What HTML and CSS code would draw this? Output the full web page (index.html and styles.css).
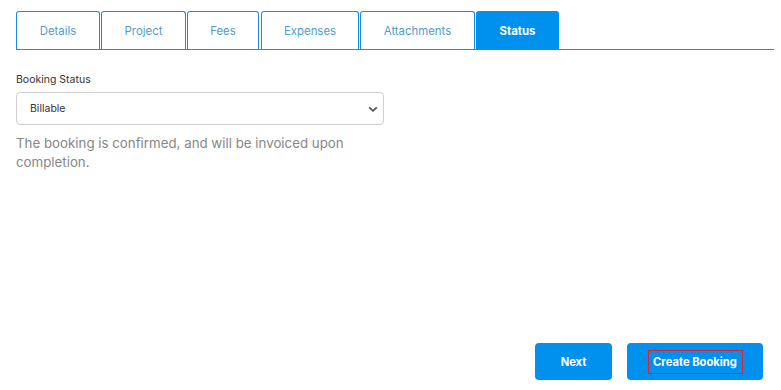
FILE: index.html
```html
<!DOCTYPE html>
<html>
<head>
<meta charset="utf-8">
<link rel="stylesheet" href="styles.css">
</head>
<body>
<div class="page">
  <div class="tabs">
    <div class="tab t1">Details</div>
    <div class="tab t2">Project</div>
    <div class="tab t3">Fees</div>
    <div class="tab t4">Expenses</div>
    <div class="tab t5">Attachments</div>
    <div class="tab t6 active">Status</div>
  </div>
  <div class="content">
    <label class="label">Booking Status</label>
    <div class="select">
      <span>Billable</span>
      <svg class="chev" width="10" height="7" viewBox="0 0 10 7"><path d="M1.2 1.4 L5 4.9 L8.8 1.4" fill="none" stroke="#555" stroke-width="1.8"/></svg>
    </div>
    <p class="desc">The booking is confirmed, and will be invoiced upon completion.</p>
  </div>
  <div class="actions">
    <div class="btn next">Next</div>
    <div class="btn create"><span class="focus">Create Booking</span></div>
  </div>
</div>
</body>
</html>
```
FILE: styles.css
```css
* { box-sizing: border-box; }
html, body { margin: 0; padding: 0; background: #fff; }
body { font-family: Inter, "Noto Sans", sans-serif; }
.page {
  height: 390px;
  display: flex;
  flex-direction: column;
  padding: 11px 7px 10px 16px;
}
.tabs {
  display: flex;
  gap: 1px;
  border-bottom: 1px solid #1a8de0;
  height: 39px;
}
.tab {
  height: 38px;
  border: 1px solid #1a8de0;
  border-bottom: none;
  border-radius: 3px 3px 0 0;
  display: flex;
  align-items: center;
  justify-content: center;
  font-size: 11.4px;
  color: #4f9bd0;
  white-space: nowrap;
}
.t1 { width: 84px; }
.t2 { width: 85px; }
.t3 { width: 72px; margin-right: 1px; }
.t4 { width: 98px; }
.t5 { width: 115px; }
.t6 { width: 83px; }
.tab.active {
  background: #0091ee;
  border-color: #0091ee;
  color: #fff;
  font-weight: 700;
}
.content {
  flex: 1;
  width: 368px;
  padding-top: 23px;
}
.label {
  display: block;
  font-size: 10.5px;
  color: #333;
  line-height: 14px;
  margin-bottom: 5px;
}
.select {
  height: 33px;
  border: 1px solid #cfcfcf;
  border-radius: 4px;
  display: flex;
  align-items: center;
  justify-content: space-between;
  padding: 0 5px 0 13px;
  font-size: 10.5px;
  color: #333;
}
.chev { margin-top: 1px; }
.desc {
  margin: 9px 0 0;
  font-size: 13.3px;
  line-height: 18.5px;
  color: #878787;
}
.actions {
  display: flex;
  justify-content: flex-end;
  gap: 15px;
  padding-right: 11px;
}
.btn {
  height: 37px;
  border-radius: 4px;
  background: #0091ee;
  color: #fff;
  font-weight: 700;
  font-size: 11.2px;
  display: flex;
  align-items: center;
  justify-content: center;
}
.next { width: 77px; }
.create { width: 136px; }
.focus {
  display: block;
  width: 95px;
  height: 24px;
  border: 1px solid #e0202a;
  line-height: 22px;
  text-align: center;
  margin-top: 1px;
}
```
